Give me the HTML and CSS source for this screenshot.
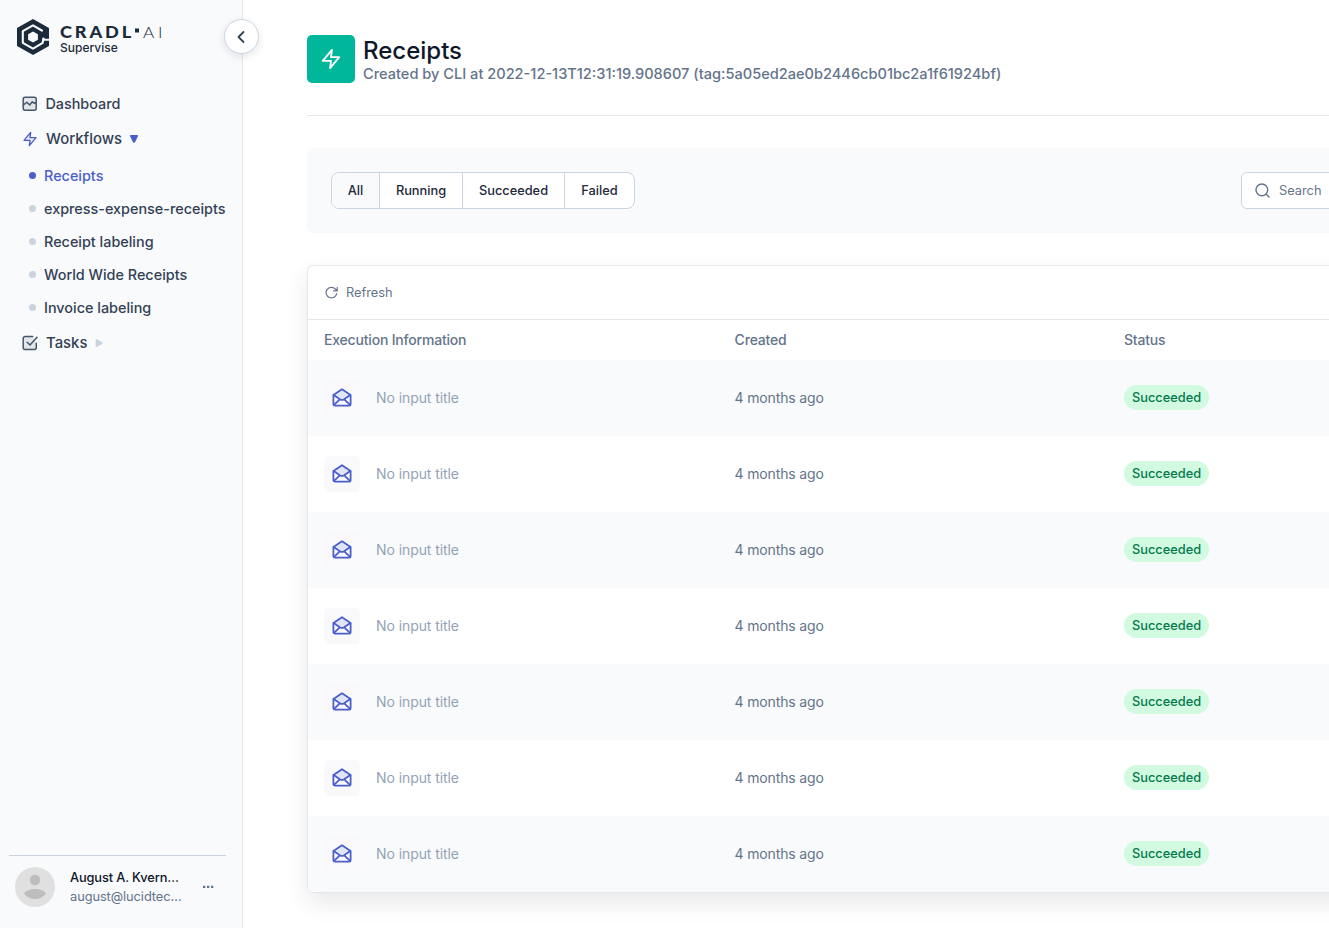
FILE: index.html
```html
<!DOCTYPE html>
<html lang="en">
<head>
<meta charset="utf-8">
<title>Receipts - Cradl AI</title>
<link rel="stylesheet" href="styles.css">
</head>
<body>
<svg class="sprite" aria-hidden="true">
  <symbol id="bolt" viewBox="0 0 24 24"><path d="M13 2 3 14h9l-1 8 10-12h-9z"/></symbol>
  <symbol id="mail-open" viewBox="0 0 20 20">
    <path class="flap" d="M1.500 6.700 10 1.100l8.500 5.600L12.500 11h-5z"/>
    <path d="M1.400 6.900 10 1.200l8.600 5.700v9.100a1.600 1.600 0 0 1-1.600 1.600H3a1.600 1.600 0 0 1-1.600-1.600z"/>
    <path d="M1.700 7.100 8.200 11.400q1.800 1.100 3.600 0L18.300 7.100M2 16.900l5.800-5.500M18 16.900l-5.800-5.500"/>
  </symbol>
</svg>
<div class="app">
  <aside class="sidebar">
    <header class="brand">
      <svg class="brand-mark" viewBox="0 0 32 36">
        <path fill="#1c2b3a" d="M16 0 32 9v18L16 36 0 27V9z"/>
        <path fill="none" stroke="#f9fafc" stroke-width="2.100" stroke-linecap="butt" d="M32 20.800h-4.500l-1.200-1.200-.6 4.200L16 29.600 5.800 23.800V12.200L16 6.400l9.700 5.600"/>
        <path fill="#f9fafc" d="m16 12.400 4.900 2.800v5.600L16 23.600l-4.900-2.800v-5.600z"/>
      </svg>
      <div class="brand-text">
        <svg class="wordmark" viewBox="0 0 104 21">
          <text class="heavy" x="0" y="18.500" textLength="74" lengthAdjust="spacingAndGlyphs">CRADL</text>
          <rect x="75" y="9.500" width="4" height="4"/>
          <text class="thin" x="83" y="18.500" textLength="23" lengthAdjust="spacingAndGlyphs">AI</text>
        </svg>
        <div class="product">Supervise</div>
      </div>
      <button class="collapse" aria-label="Collapse"><svg viewBox="0 0 10 14"><path d="M7.500 2 2.500 7l5 5"/></svg></button>
    </header>
    <nav class="nav">
      <a class="item dashboard"><svg class="ico" viewBox="0 0 16 16"><rect class="tint" x="1.200" y="1.200" width="13" height="13" rx="2"/><path d="m1.500 9 3.200-2.700 3 2.600 2.600-3.100 1.700 1.500 2.300-.8"/></svg>Dashboard</a>
      <a class="item workflows"><svg class="ico bolt"><use href="#bolt"/></svg>Workflows<svg class="caret" viewBox="0 0 8 8"><path fill="#4a5fc9" d="M.8 0h6.400q1.200.3.600 1.500L5 7.300q-1 1-2 0L.2 1.500Q-.4.300.8 0z"/></svg></a>
      <div class="sub">
        <a class="active">Receipts</a>
        <a>express-expense-receipts</a>
        <a>Receipt labeling</a>
        <a>World Wide Receipts</a>
        <a>Invoice labeling</a>
      </div>
      <a class="item tasks"><svg class="ico" viewBox="0 0 16 16"><path class="tint" d="M14.300 8.300v4.300a2 2 0 0 1-2 2H3.200a2 2 0 0 1-2-2V3.500a2 2 0 0 1 2-2h7.500"/><path d="M5.200 7.300 8 10l7-7.800"/></svg>Tasks<svg class="caret" viewBox="0 0 8 8"><path fill="#cbd3df" d="M.7.800v6.400q.3 1.200 1.500.6L7 5q1-1 0-2L2.200.2Q1-.400.7.800z"/></svg></a>
    </nav>
    <footer class="user">
      <svg class="avatar" viewBox="0 0 40 40"><circle cx="20" cy="20" r="20" fill="#e0e0e0"/><circle cx="20" cy="13" r="5.200" fill="#bdbdbd"/><path fill="#bdbdbd" d="M9 26.500c2-3 6.500-4.500 11-4.500s9 1.500 11 4.500C28.500 30 24.500 32 20 32S11.500 30 9 26.500z"/></svg>
      <div class="who"><div class="name">August A. Kvern…</div><div class="email">august@lucidtec…</div></div>
      <svg class="more" viewBox="0 0 12 4"><path d="M1 .8h2.300v2.300H1zM5 .8h2.300v2.300H5zM9 .8h2.300v2.300H9z"/></svg>
    </footer>
  </aside>
  <main class="main">
    <div class="content">
      <header class="head">
        <div class="tile"><svg><use href="#bolt"/></svg></div>
        <div><h1>Receipts</h1><p>Created by CLI at 2022-12-13T12:31:19.908607 (tag:5a05ed2ae0b2446cb01bc2a1f61924bf)</p></div>
      </header>
      <section class="filters">
        <div class="segments"><button class="on">All</button><button>Running</button><button>Succeeded</button><button>Failed</button></div>
        <div class="search"><svg viewBox="0 0 16 16"><circle cx="7.300" cy="7.300" r="6.300"/><path d="m12 12 3 3"/></svg>Search</div>
      </section>
      <section class="card">
        <div class="toolbar"><svg viewBox="0 0 24 24"><path d="M22.500 2.500v6.500H16M21.500 14a9.800 9.800 0 1 1-2.500-8.500L22 9"/></svg>Refresh</div>
        <div class="row header"><span>Execution Information</span><span>Created</span><span>Status</span></div>
        <div class="row"><span class="exec"><i><svg><use href="#mail-open"/></svg></i>No input title</span><span>4 months ago</span><span><b class="badge">Succeeded</b></span></div>
        <div class="row"><span class="exec"><i><svg><use href="#mail-open"/></svg></i>No input title</span><span>4 months ago</span><span><b class="badge">Succeeded</b></span></div>
        <div class="row"><span class="exec"><i><svg><use href="#mail-open"/></svg></i>No input title</span><span>4 months ago</span><span><b class="badge">Succeeded</b></span></div>
        <div class="row"><span class="exec"><i><svg><use href="#mail-open"/></svg></i>No input title</span><span>4 months ago</span><span><b class="badge">Succeeded</b></span></div>
        <div class="row"><span class="exec"><i><svg><use href="#mail-open"/></svg></i>No input title</span><span>4 months ago</span><span><b class="badge">Succeeded</b></span></div>
        <div class="row"><span class="exec"><i><svg><use href="#mail-open"/></svg></i>No input title</span><span>4 months ago</span><span><b class="badge">Succeeded</b></span></div>
        <div class="row"><span class="exec"><i><svg><use href="#mail-open"/></svg></i>No input title</span><span>4 months ago</span><span><b class="badge">Succeeded</b></span></div>
      </section>
    </div>
  </main>
</div>
</body>
</html>
```
FILE: styles.css
```css
* { box-sizing: border-box; }
body { margin: 0; font-family: Inter, "Liberation Sans", sans-serif; color: #334155; background: #fff; }
button { font: inherit; color: inherit; padding: 0; margin: 0; border: 0; background: none; }
svg { display: block; fill: none; stroke-linecap: round; stroke-linejoin: round; flex: none; }
.sprite { position: absolute; width: 0; height: 0; }
.app { display: flex; height: 928px; overflow: hidden; }

.sidebar { position: relative; z-index: 1; flex: none; width: 243px; display: flex; flex-direction: column; background: #f9fafc; border-right: 1px solid #e4e7eb; }
.brand { display: flex; padding: 19px 0 0 17px; height: 86px; }
.brand-mark { width: 32px; height: 36px; }
.brand-text { margin-left: 11px; color: #1c2b3a; }
.wordmark { width: 104px; height: 21px; fill: #1c2b3a; font: 16.500px Lato, sans-serif; overflow: visible; }
.wordmark .heavy { font-weight: 900; letter-spacing: 2.600px; }
.wordmark .thin { font-weight: 300; letter-spacing: 3.500px; }
.product { font-size: 12px; font-weight: 500; line-height: 16px; }
.collapse { position: absolute; left: 224px; top: 19px; width: 35px; height: 35px; display: grid; place-items: center; border: 1px solid #cbd5e1; border-radius: 50%; background: #fff; box-shadow: 0 3px 8px rgba(15, 23, 42, .1); }
.collapse svg { width: 10px; height: 14px; margin-right: 2px; stroke: #334155; stroke-width: 1.800; }

.nav { flex: 1; font-size: 14.900px; font-weight: 500; }
.item { display: flex; align-items: center; height: 35px; padding-left: 22px; }
.dashboard { font-size: 14.400px; }
.ico { width: 16px; height: 16px; margin-right: 8px; stroke: #475569; stroke-width: 1.500; }
.dashboard .ico { margin-right: 7.400px; }
.tint { fill: #e2e5e9; }
.bolt { stroke: #4a5fc9; stroke-width: 2; fill: #e8ebf8; }
.caret { width: 8px; height: 8px; margin-left: 8px; }
.sub { padding: 3px 0 1px; }
.sub a { display: flex; align-items: center; height: 33px; padding-left: 29px; font-size: 14.400px; }
.sub a::before { content: ""; width: 7px; height: 7px; border-radius: 50%; background: #cbd3df; margin-right: 8px; }
.sub .active { color: #4a5fc9; }
.sub .active::before { background: #4a5fc9; }

.user { display: flex; align-items: center; height: 73px; margin: 0 16px 0 9px; padding: 0 12px 10px 6px; border-top: 1px solid #cbd3df; }
.avatar { width: 40px; height: 40px; }
.who { width: 114px; margin-left: 15px; font-size: 12.800px; line-height: 19px; white-space: nowrap; }
.name { color: #0f172a; font-weight: 500; letter-spacing: -.12px; }
.email { color: #64748b; letter-spacing: -.06px; }
.more { width: 12px; height: 4px; margin-left: auto; fill: #64748b; }

.main { flex: 1; min-width: 0; padding: 35px 0 0 64px; }
.content { width: 1170px; }
.head { display: flex; gap: 8px; height: 81px; border-bottom: 1px solid #e5e7eb; }
.tile { width: 48px; height: 48px; display: grid; place-items: center; border-radius: 5px; background: #00b69b; }
.tile svg { width: 22px; height: 24px; stroke: #fff; stroke-width: 2; }
h1 { margin: 0; font-size: 24px; line-height: 31px; font-weight: 500; color: #0f172a; }
.head p { margin: 0; font-size: 14.580px; line-height: 16px; font-weight: 500; color: #64748b; }

.filters { display: flex; align-items: center; height: 85px; margin-top: 32px; padding-left: 24px; border-radius: 6px; background: #f9fafc; font-size: 12.800px; }
.segments { display: grid; grid-template-columns: 47px 83px 102px 70px; width: 304px; height: 37px; border: 1px solid #cbd5e1; border-radius: 8px; background: #fff; overflow: hidden; color: #1e293b; font-weight: 500; }
.segments button { padding-bottom: 1px; }
.segments button + button { border-left: 1px solid #cbd5e1; }
.segments .on { background: #f9fafc; }
.search { display: flex; align-items: center; gap: 9px; width: 211px; height: 37px; margin-left: 606px; padding: 0 0 1px 13px; border: 1px solid #cbd5e1; border-radius: 6px; background: #fff; color: #64748b; }
.search svg { width: 15px; height: 15px; stroke: #64748b; stroke-width: 1.500; }

.card { margin-top: 32px; border: 1px solid #e5e7eb; border-radius: 6px; overflow: hidden; background: #fff; box-shadow: 0 10px 24px rgba(0, 0, 0, .09); }
.toolbar { display: flex; align-items: center; gap: 8px; height: 54px; padding-left: 17px; border-bottom: 1px solid #e5e7eb; font-size: 12.800px; color: #64748b; }
.toolbar svg { width: 13px; height: 13px; stroke: #64748b; stroke-width: 2.200; }
.row { display: grid; grid-template-columns: 410.600px 389.400px 1fr; align-items: center; height: 76px; padding: 0 0 1px 16px; font-size: 14px; letter-spacing: -.16px; color: #64748b; }
.row:nth-child(odd) { background: #f9fafc; }
.row.header { height: 40px; font-weight: 500; background: #fff; letter-spacing: -.19px; }
.exec { display: flex; align-items: center; gap: 16px; color: #94a3b8; letter-spacing: -.08px; }
.exec i { display: grid; place-items: center; width: 36px; height: 36px; margin-top: 1px; border-radius: 5px; background: #f9f9fc; }
.exec svg { width: 20px; height: 20px; stroke: #4a5fc9; stroke-width: 1.800; }
.flap { fill: #e2e5f4; stroke: none; }
.badge { display: inline-block; height: 25px; padding: 0 8px; border-radius: 13px; background: #d1fae0; color: #04794e; font-size: 12.800px; font-weight: 500; line-height: 25px; letter-spacing: 0; }
```
